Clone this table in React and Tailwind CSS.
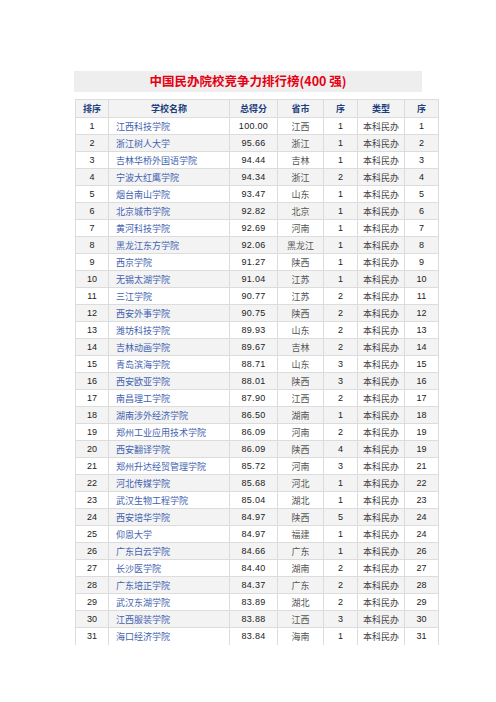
import React from "react";

const rows = [
  [1, "江西科技学院", "100.00", "江西", 1, 1],
  [2, "浙江树人大学", "95.66", "浙江", 1, 2],
  [3, "吉林华桥外国语学院", "94.44", "吉林", 1, 3],
  [4, "宁波大红鹰学院", "94.34", "浙江", 2, 4],
  [5, "烟台南山学院", "93.47", "山东", 1, 5],
  [6, "北京城市学院", "92.82", "北京", 1, 6],
  [7, "黄河科技学院", "92.69", "河南", 1, 7],
  [8, "黑龙江东方学院", "92.06", "黑龙江", 1, 8],
  [9, "西京学院", "91.27", "陕西", 1, 9],
  [10, "无锡太湖学院", "91.04", "江苏", 1, 10],
  [11, "三江学院", "90.77", "江苏", 2, 11],
  [12, "西安外事学院", "90.75", "陕西", 2, 12],
  [13, "潍坊科技学院", "89.93", "山东", 2, 13],
  [14, "吉林动画学院", "89.67", "吉林", 2, 14],
  [15, "青岛滨海学院", "88.71", "山东", 3, 15],
  [16, "西安欧亚学院", "88.01", "陕西", 3, 16],
  [17, "南昌理工学院", "87.90", "江西", 2, 17],
  [18, "湖南涉外经济学院", "86.50", "湖南", 1, 18],
  [19, "郑州工业应用技术学院", "86.09", "河南", 2, 19],
  [20, "西安翻译学院", "86.09", "陕西", 4, 19],
  [21, "郑州升达经贸管理学院", "85.72", "河南", 3, 21],
  [22, "河北传媒学院", "85.68", "河北", 1, 22],
  [23, "武汉生物工程学院", "85.04", "湖北", 1, 23],
  [24, "西安培华学院", "84.97", "陕西", 5, 24],
  [25, "仰恩大学", "84.97", "福建", 1, 24],
  [26, "广东白云学院", "84.66", "广东", 1, 26],
  [27, "长沙医学院", "84.40", "湖南", 2, 27],
  [28, "广东培正学院", "84.37", "广东", 2, 28],
  [29, "武汉东湖学院", "83.89", "湖北", 2, 29],
  [30, "江西服装学院", "83.88", "江西", 3, 30],
  [31, "海口经济学院", "83.84", "海南", 1, 31],
];

const cjk = "font-['Noto_Sans_CJK_SC',sans-serif]";
const num = "font-['Liberation_Sans','Noto_Sans_CJK_SC',sans-serif]";

export default function App() {
  return (
    <div className="w-[496px] h-[702px] bg-white overflow-hidden pt-[71px]">
      <div className="ml-[74px] w-[348px] h-[21px] bg-[#eeeeee] flex items-center justify-center">
        <span className={`${cjk} text-[12.5px] font-bold text-[#e60012] leading-none`}>
          中国民办院校竞争力排行榜(400 强)
        </span>
      </div>
      <table className="ml-[75px] mt-[7px] w-[363px] border-collapse table-fixed">
        <colgroup>
          <col className="w-[33px]" />
          <col className="w-[121px]" />
          <col className="w-[48px]" />
          <col className="w-[46px]" />
          <col className="w-[34px]" />
          <col className="w-[47px]" />
          <col className="w-[34px]" />
        </colgroup>
        <thead>
          <tr className="h-[18px] bg-[#f3f3f3]">
            {["排序", "学校名称", "总得分", "省市", "序", "类型", "序"].map((h, i) => (
              <th
                key={i}
                className={`${cjk} p-0 text-[9px] font-bold text-[#1b3f7d] text-center border border-[#dcdcdc] leading-none`}
              >
                {h}
              </th>
            ))}
          </tr>
        </thead>
        <tbody>
          {rows.map((r, idx) => {
            const last = idx === rows.length - 1;
            const bg = r[0] % 2 === 0 ? "bg-[#f3f3f3]" : "bg-white";
            const cell = `p-0 h-[17px] leading-none border-x border-[#dcdcdc] ${last ? "border-t" : "border-y"}`;
            return (
              <tr key={idx} className={bg}>
                <td className={`${cell} ${num} text-[9px] text-[#222] text-center`}>{r[0]}</td>
                <td className={`${cell} ${cjk} text-[9px] text-[#4262b0] text-left pl-[7px] whitespace-nowrap`}>{r[1]}</td>
                <td className={`${cell} ${num} text-[9px] text-[#222] text-center tracking-[0.3px]`}>{r[2]}</td>
                <td className={`${cell} ${cjk} text-[9px] text-[#555] text-center`}>{r[3]}</td>
                <td className={`${cell} ${num} text-[9px] text-[#222] text-center`}>{r[4]}</td>
                <td className={`${cell} ${cjk} text-[9px] text-[#444] text-center`}>本科民办</td>
                <td className={`${cell} ${num} text-[9px] text-[#222] text-center`}>{r[5]}</td>
              </tr>
            );
          })}
        </tbody>
      </table>
    </div>
  );
}
